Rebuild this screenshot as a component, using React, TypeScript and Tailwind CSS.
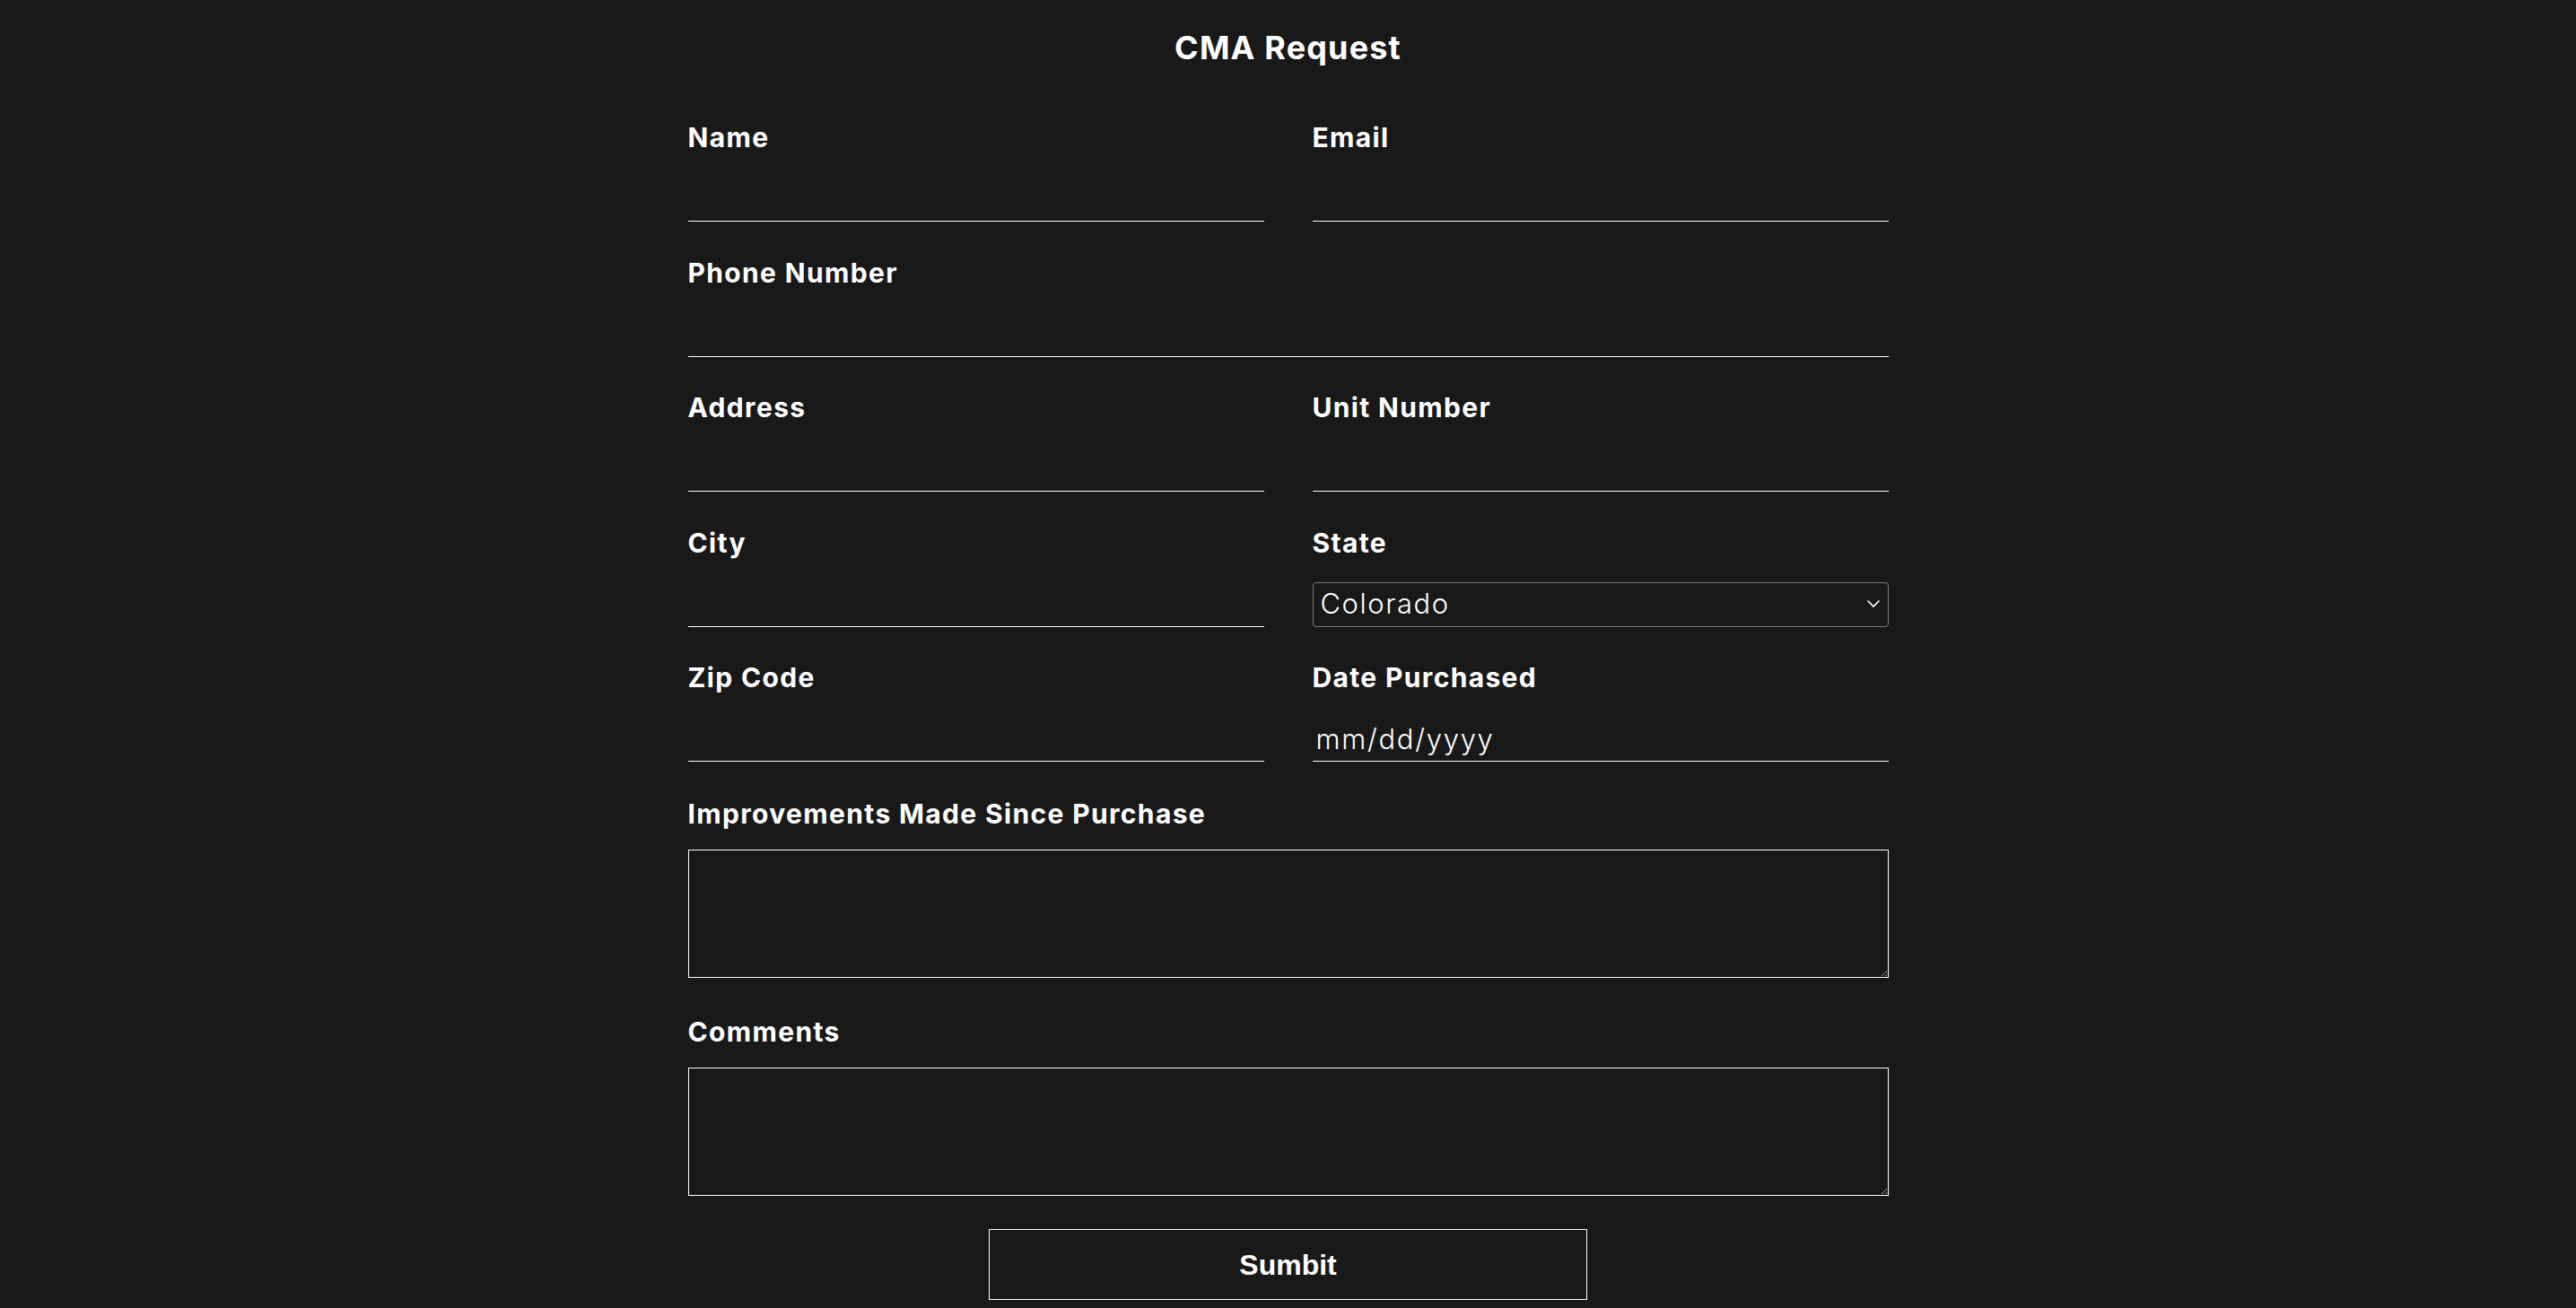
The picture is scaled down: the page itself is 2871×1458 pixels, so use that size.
import type { ReactNode } from "react";

const FONT = "font-['Inter','Open_Sans',sans-serif]";

function Label({ children }: { children: ReactNode }) {
  return <label className="block text-[30px] leading-[36px] font-bold text-white tracking-[0.045em]">{children}</label>;
}

function TextField({ label, placeholder }: { label: string; placeholder?: string }) {
  return (
    <div>
      <Label>{label}</Label>
      <input
        type="text"
        placeholder={placeholder}
        className="mt-[26px] block w-full h-[50px] bg-transparent border-0 border-b border-white px-[4px] text-[31px] font-light tracking-[0.055em] text-white placeholder:text-white outline-none"
      />
    </div>
  );
}

function StateField() {
  return (
    <div>
      <Label>State</Label>
      <div className="relative mt-[26px] h-[50px]">
        <select
          defaultValue="Colorado"
          className="appearance-none block w-full h-[50px] bg-transparent border border-[#7a7a7a] rounded-[4px] pl-[8px] text-[31px] font-light tracking-[0.05em] text-white outline-none"
        >
          <option className="bg-[#191919]">Colorado</option>
          <option className="bg-[#191919]">Utah</option>
          <option className="bg-[#191919]">Wyoming</option>
        </select>
        <svg className="pointer-events-none absolute right-[9px] top-[19px]" width="16" height="10" viewBox="0 0 16 10" fill="none">
          <path d="M1.5 1.5 L8 8 L14.5 1.5" stroke="white" strokeWidth="1.6" />
        </svg>
      </div>
    </div>
  );
}

function AreaField({ label, top }: { label: string; top: string }) {
  return (
    <div className={top}>
      <Label>{label}</Label>
      <textarea className="mt-[22px] block w-full h-[143px] bg-transparent border border-white text-[24px] text-white outline-none" />
    </div>
  );
}

export default function App() {
  return (
    <div className={`min-h-screen bg-[#191919] ${FONT}`}>
      <form className="w-[1338px] mx-auto pt-[31px] pb-[4px]">
        <h1 className="text-center text-[36px] leading-[44px] font-bold text-white tracking-[0.032em]">CMA Request</h1>
        <div className="mt-[60px] grid grid-cols-2 gap-x-[54px] gap-y-[38.5px]">
          <TextField label="Name" />
          <TextField label="Email" />
          <div className="col-span-2">
            <TextField label="Phone Number" />
          </div>
          <TextField label="Address" />
          <TextField label="Unit Number" />
          <TextField label="City" />
          <StateField />
          <TextField label="Zip Code" />
          <TextField label="Date Purchased" placeholder="mm/dd/yyyy" />
        </div>
        <AreaField label="Improvements Made Since Purchase" top="mt-[40px]" />
        <AreaField label="Comments" top="mt-[42px]" />
        <button
          type="button"
          className="mt-[37px] mx-auto block w-[667px] h-[79px] border border-white font-['Liberation_Sans',Arial,sans-serif] text-[32px] font-bold text-white"
        >
          Sumbit
        </button>
      </form>
    </div>
  );
}
